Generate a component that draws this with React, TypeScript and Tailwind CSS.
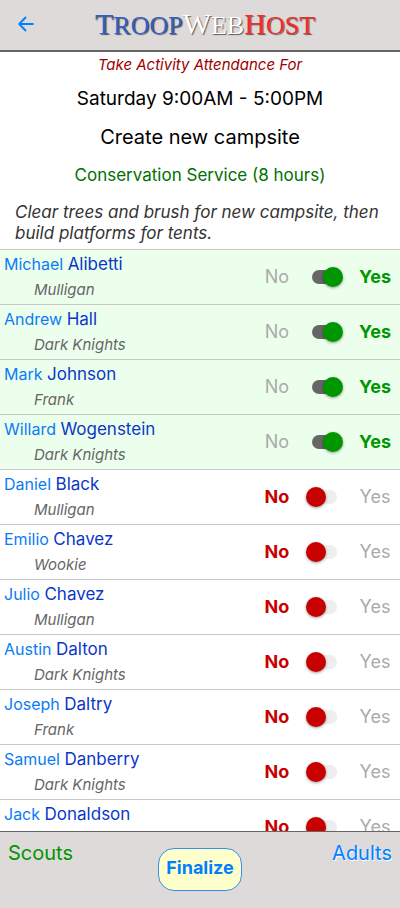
import { useState } from "react";
import clsx from "clsx";

interface Scout {
  first: string;
  last: string;
  patrol: string;
  present: boolean;
}

const scouts: Scout[] = [
  { first: "Michael", last: "Alibetti", patrol: "Mulligan", present: true },
  { first: "Andrew", last: "Hall", patrol: "Dark Knights", present: true },
  { first: "Mark", last: "Johnson", patrol: "Frank", present: true },
  { first: "Willard", last: "Wogenstein", patrol: "Dark Knights", present: true },
  { first: "Daniel", last: "Black", patrol: "Mulligan", present: false },
  { first: "Emilio", last: "Chavez", patrol: "Wookie", present: false },
  { first: "Julio", last: "Chavez", patrol: "Mulligan", present: false },
  { first: "Austin", last: "Dalton", patrol: "Dark Knights", present: false },
  { first: "Joseph", last: "Daltry", patrol: "Frank", present: false },
  { first: "Samuel", last: "Danberry", patrol: "Dark Knights", present: false },
  { first: "Jack", last: "Donaldson", patrol: "Mulligan", present: false },
];

const Logo: React.FC = () => (
  <h1 className="h-8 font-['Liberation_Serif',serif] text-[26px] leading-8 whitespace-nowrap [text-shadow:1px_1px_1px_#555]">
    <span className="text-[#315fc4]"><span className="text-[30px]">T</span>ROOP</span>
    <span className="text-white"><span className="text-[30px]">W</span>EB</span>
    <span className="text-[#f52b2b]"><span className="text-[30px]">H</span>OST</span>
  </h1>
);

const AttendanceRow: React.FC<{ scout: Scout }> = ({ scout }) => {
  const [present, setPresent] = useState(scout.present);

  return (
    <li
      className={clsx(
        "flex items-center justify-between border-t border-[#c8c8c8] pl-1 pr-2",
        present ? "bg-[#ecffec]" : "bg-white"
      )}
    >
      {/* Name and patrol */}
      <div className="pt-0.5 pb-1">
        <a href="#scout" className="block h-6 text-base leading-6 text-[#0a7cf5]">
          {scout.first} <span className="text-[17px] text-[#0a37c8]">{scout.last}</span>
        </a>
        <p className="pl-[30px] pt-1 text-[15px] leading-5 italic text-[#666]">{scout.patrol}</p>
      </div>

      {/* No / Yes switch */}
      <label className="flex items-center">
        <span className={clsx("w-[30px] text-center text-lg", present ? "text-[#aaa]" : "font-bold text-[#c80000]")}>
          No
        </span>
        <input
          type="checkbox"
          checked={present}
          onChange={(e) => setPresent(e.target.checked)}
          aria-label={`${scout.first} ${scout.last} attended`}
          className="relative mr-[15px] ml-3.5 h-5 w-[37px] appearance-none before:absolute before:inset-x-1.5 before:inset-y-[3px] before:rounded-full before:bg-[#eee] before:content-[''] after:absolute after:left-0 after:top-0 after:size-5 after:rounded-full after:bg-[#c80000] after:shadow-[0_1px_3px_rgba(0,0,0,0.4)] after:content-[''] checked:before:bg-[#666] checked:after:left-[17px] checked:after:bg-[#009600]"
        />
        <span className={clsx("w-[34px] text-center text-lg", present ? "font-bold text-[#009600]" : "text-[#aaa]")}>
          Yes
        </span>
      </label>
    </li>
  );
};

const App: React.FC = () => {
  return (
    <div className="flex h-screen flex-col bg-white font-['Inter',sans-serif] text-black">
      {/* Top bar */}
      <header className="grid shrink-0 grid-cols-[52px_1fr_42px] items-center border-b-2 border-[#666] bg-[#dedad9] pt-2 pb-2.5">
        <button aria-label="Back" className="justify-self-center text-[#0080ff]">
          <svg width="16" height="16" viewBox="0 0 16 16" fill="none" stroke="currentColor" strokeWidth="1.8">
            <path d="M15.5 8H1.5M8 1L1.2 8L8 15" strokeLinejoin="round" />
          </svg>
        </button>
        <div className="flex justify-center">
          <Logo />
        </div>
      </header>

      {/* Activity details */}
      <section className="shrink-0 text-center">
        <p className="pt-0.5 text-[15px] leading-[22px] italic text-[#a00000]">Take Activity Attendance For</p>
        <h2 className="pt-2 text-[19px] leading-[30px]">Saturday 9:00AM - 5:00PM</h2>
        <h2 className="pt-2 text-xl leading-[30px]">Create new campsite</h2>
        <p className="pt-2.5 text-[17px] leading-[26px] text-[#007000]">Conservation Service (8 hours)</p>
        <p className="px-[15px] pt-3.5 pb-[5px] text-left text-[17px] leading-[21px] italic text-[#333]">
          Clear trees and brush for new campsite, then build platforms for tents.
        </p>
      </section>

      {/* Attendance list */}
      <ul className="min-h-0 flex-1 overflow-hidden">
        {scouts.map((scout) => (
          <AttendanceRow key={`${scout.first}-${scout.last}`} scout={scout} />
        ))}
      </ul>

      {/* Bottom bar */}
      <footer className="grid shrink-0 grid-cols-[1fr_auto_1fr] items-start border-t border-[#666] bg-[#dedad9] px-2 pt-[7px] pb-[17px]">
        <a href="#scouts" className="text-xl leading-7 text-[#009600]">Scouts</a>
        <button className="mt-[9px] h-[43px] rounded-2xl border border-[#3090f0] bg-[#ffffcc] px-[7px] pb-1 text-lg font-bold text-[#0080ff]">
          Finalize
        </button>
        <a href="#adults" className="justify-self-end text-xl leading-7 text-[#0080ff] [text-shadow:1px_1px_1px_#fff]">
          Adults
        </a>
      </footer>
    </div>
  );
};

export default App;
